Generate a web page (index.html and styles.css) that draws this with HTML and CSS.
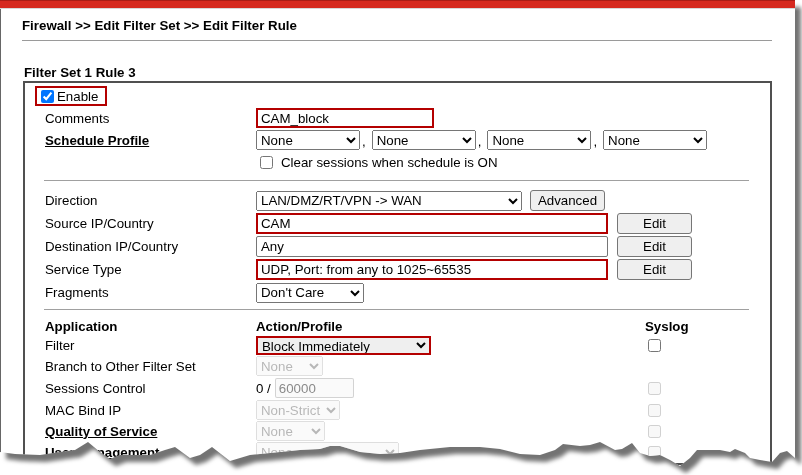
FILE: index.html
```html
<!DOCTYPE html>
<html>
<head>
<meta charset="utf-8">
<title>Edit Filter Rule</title>
<link rel="stylesheet" href="styles.css">
</head>
<body>
<div class="shot">
  <div class="page">
    <div class="topbar"></div>
    <div class="frame">
      <div class="title">Firewall &gt;&gt; Edit Filter Set &gt;&gt; Edit Filter Rule</div>
      <div class="title-rule"></div>
      <div class="set-title">Filter Set 1 Rule 3</div>
      <div class="box">
        <div class="enable"><input type="checkbox" class="chk-en" checked><span>Enable</span></div>

        <div class="row h22"><span class="lbl">Comments</span><input type="text" class="txt red w178" value="CAM_block"></div>
        <div class="row h22"><span class="lbl link">Schedule Profile</span><select class="sel w104"><option>None</option></select><span class="comma">,</span><select class="sel w104"><option>None</option></select><span class="comma">,</span><select class="sel w104"><option>None</option></select><span class="comma">,</span><select class="sel w104"><option>None</option></select></div>
        <div class="row h22"><span class="lbl"></span><input type="checkbox" class="chk-clear"><span>Clear sessions when schedule is ON</span></div>

        <div class="sep sep1"></div>

        <div class="row h23 first-after"><span class="lbl">Direction</span><select class="sel w266"><option>LAN/DMZ/RT/VPN -&gt; WAN</option></select><button class="btn w75 adv">Advanced</button></div>
        <div class="row h23"><span class="lbl">Source IP/Country</span><input type="text" class="txt red w352" value="CAM"><button class="btn w75 edit">Edit</button></div>
        <div class="row h23"><span class="lbl">Destination IP/Country</span><input type="text" class="txt plain w352" value="Any"><button class="btn w75 edit">Edit</button></div>
        <div class="row h23"><span class="lbl">Service Type</span><input type="text" class="txt red w352" value="UDP, Port: from any to 1025~65535"><button class="btn w75 edit">Edit</button></div>
        <div class="row h23"><span class="lbl">Fragments</span><select class="sel w108"><option>Don't Care</option></select></div>

        <div class="sep sep2"></div>

        <div class="row h18 app-head"><span class="lbl bold">Application</span><span class="val bold">Action/Profile</span><span class="sys bold">Syslog</span></div>
        <div class="row h20"><span class="lbl">Filter</span><span class="val"><select class="sel red-sel w175"><option>Block Immediately</option></select></span><span class="sys"><input type="checkbox" class="chk-sys"></span></div>
        <div class="row h22"><span class="lbl">Branch to Other Filter Set</span><span class="val"><select class="sel w67" disabled><option>None</option></select></span><span class="sys"></span></div>
        <div class="row h22"><span class="lbl">Sessions Control</span><span class="val"><span class="slash">0 /</span><input type="text" class="txt dis w79" value="60000" disabled></span><span class="sys"><input type="checkbox" class="chk-sys" disabled></span></div>
        <div class="row h22"><span class="lbl">MAC Bind IP</span><span class="val"><select class="sel w84" disabled><option>Non-Strict</option></select></span><span class="sys"><input type="checkbox" class="chk-sys" disabled></span></div>
        <div class="row h20"><span class="lbl link">Quality of Service</span><span class="val"><select class="sel w69" disabled><option>None</option></select></span><span class="sys"><input type="checkbox" class="chk-sys" disabled></span></div>
        <div class="row h22"><span class="lbl link">User Management</span><span class="val"><select class="sel w143" disabled><option>None</option></select></span><span class="sys"><input type="checkbox" class="chk-sys" disabled></span></div>
      </div>
    </div>
  </div>
</div>
</body>
</html>
```

FILE: styles.css
```css
html, body {
  margin: 0;
  padding: 0;
  background: #fff;
  overflow: hidden;
}

body {
  font-family: "Liberation Sans", Arial, sans-serif;
  font-size: 13.3px;
  color: #000;
}

.shot {
  width: 802px;
  height: 475px;
  filter: drop-shadow(6px 7px 2px rgba(0, 0, 0, 0.55));
}

.page {
  width: 795px;
  height: 475px;
  overflow: hidden;
  background: #fff;
  clip-path: polygon(0 0, 795px 0, 795px 458px, 787px 451px, 780px 453px, 772px 462px, 760px 460px, 750px 458px, 745px 453px, 735px 449px, 730px 452px, 720px 450px, 697px 450px, 690px 458px, 680px 466px, 670px 460px, 660px 455px, 650px 456px, 640px 453px, 632px 443px, 622px 449px, 615px 450px, 600px 442px, 590px 445px, 580px 446px, 563px 444px, 555px 450px, 540px 455px, 520px 454px, 500px 449px, 480px 447px, 450px 447px, 420px 450px, 400px 453px, 380px 454px, 360px 452px, 340px 446px, 330px 446px, 320px 449px, 300px 450px, 280px 452px, 250px 455px, 230px 461px, 212px 447px, 200px 455px, 190px 458px, 175px 447px, 165px 450px, 150px 455px, 120px 455px, 110px 459px, 100px 452px, 88px 442px, 75px 450px, 60px 452px, 40px 455px, 15px 454px, 0 452px);
}

.topbar {
  height: 7px;
  background: #d6291f;
  border-top: 1px solid #a91d16;
  border-bottom: 1px solid #d8d8d8;
}

.frame {
  border-left: 1px solid #666;
  padding: 9px 23px 0 21px;
  height: 466px;
  box-sizing: border-box;
  overflow: hidden;
}

.title {
  font-weight: bold;
  line-height: 15px;
}

.title-rule {
  height: 1px;
  background: #9a9a9a;
  margin-top: 7px;
}

.set-title {
  font-weight: bold;
  line-height: 15px;
  margin-top: 24px;
  padding-left: 2px;
}

.box {
  margin-top: 1px;
  margin-left: 1px;
  border: 2px solid #505050;
}

.enable {
  display: flex;
  align-items: center;
  box-sizing: border-box;
  width: 72px;
  height: 20px;
  margin: 3px 0 0 10px;
  border: 2px solid #b40000;
  padding-left: 4px;
}

.chk-en {
  width: 13px;
  height: 13px;
  margin: 0 3px 0 0;
}

.row {
  display: flex;
  align-items: center;
  padding-left: 20px;
}

.enable + .row {
  margin-top: 1px;
}

.h18 { height: 18px; }
.h20 { height: 20px; }
.h22 { height: 22px; }
.h23 { height: 23px; }

.lbl {
  width: 211px;
  flex: none;
  white-space: nowrap;
}

.val {
  width: 389px;
  flex: none;
  display: flex;
  align-items: center;
}

.sys {
  flex: none;
  display: flex;
  align-items: center;
}

.bold {
  font-weight: bold;
}

.link {
  font-weight: bold;
  text-decoration: underline;
}

.sep {
  height: 1px;
  background: #a0a0a0;
  margin-left: 19px;
  margin-right: 21px;
}

.sep1 {
  margin-top: 7px;
}

.first-after {
  margin-top: 8px;
}

.sep2 {
  margin-top: 5px;
}

.app-head {
  margin-top: 7px;
}

.txt {
  box-sizing: border-box;
  height: 21px;
  margin: 0;
  font: 13.3px "Liberation Sans", Arial, sans-serif;
  color: #000;
  background: #fff;
  outline: none;
}

.txt.red {
  border: 2px solid #b40000;
  border-radius: 0;
  padding: 0 3px;
}

.h22 .txt.red {
  height: 20px;
}

.txt.plain {
  border: 1px solid #767676;
  border-radius: 2px;
  padding: 0 4px;
}

.txt.dis {
  height: 20px;
  border: 1px solid rgba(118, 118, 118, 0.3);
  border-radius: 2px;
  background: rgba(239, 239, 239, 0.3);
  color: #8a8a8a;
  padding: 0 3px;
}

.sel {
  box-sizing: border-box;
  height: 20px;
  margin: 0;
  font: 13.3px "Liberation Sans", Arial, sans-serif;
  color: #000;
}

.sel:disabled {
  color: #9a9a9a;
}

.red-sel {
  height: 19px;
  border: 2px solid #b40000;
  border-radius: 0;
}

.comma {
  margin: 0 6px 0 2px;
  align-self: flex-end;
  line-height: 18px;
}

.chk-clear {
  width: 13px;
  height: 13px;
  margin: 0 8px 0 4px;
}

.chk-sys {
  width: 13px;
  height: 13px;
  margin: 0 0 0 3px;
}

.btn {
  box-sizing: border-box;
  height: 21px;
  margin: 0 0 0 9px;
  padding: 0 4px;
  font: 13.3px "Liberation Sans", Arial, sans-serif;
  color: #000;
  background: #efefef;
  border: 1px solid #767676;
  border-radius: 3px;
}

.btn.adv {
  margin-left: 8px;
}

.slash {
  margin-right: 4px;
}

.w67 { width: 67px; }
.w69 { width: 69px; }
.w75 { width: 75px; }
.w79 { width: 79px; }
.w84 { width: 84px; }
.w104 { width: 104px; }
.w108 { width: 108px; }
.w143 { width: 143px; }
.w175 { width: 175px; }
.w178 { width: 178px; }
.w266 { width: 266px; }
.w352 { width: 352px; }
```
